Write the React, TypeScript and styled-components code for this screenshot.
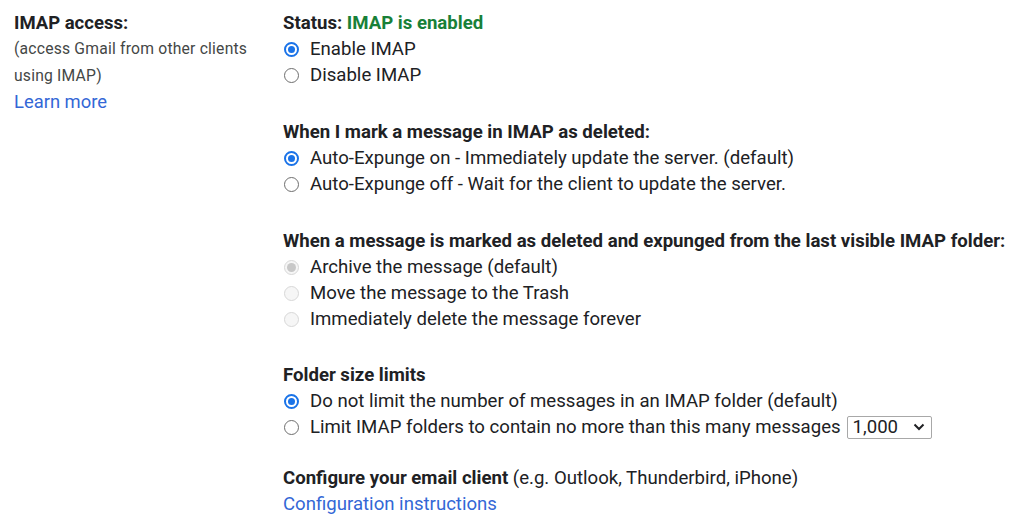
import React from "react";
import styled, { createGlobalStyle } from "styled-components";

const Global = createGlobalStyle`
  html, body { margin: 0; padding: 0; background: #fff; }
  body { font-family: Roboto, "Liberation Sans", Arial, sans-serif; color: #202124; }
`;

const Page = styled.div`
  display: grid;
  grid-template-columns: 269px 1fr;
  padding: 10px 0 0 14px;
  width: 1024px;
  box-sizing: border-box;
`;

const LeftCol = styled.div`
  display: flex;
  flex-direction: column;
  max-width: 250px;
`;

const LeftTitle = styled.div`
  font-weight: 700;
  font-size: 18.5px;
  line-height: 26px;
  color: #202124;
`;

const LeftSub = styled.div`
  font-size: 15.7px;
  line-height: 26.5px;
  color: #444746;
  letter-spacing: 0.2px;
`;

const Link = styled.a<{ $size?: number }>`
  color: #3367d6;
  text-decoration: none;
  font-size: ${(p) => p.$size ?? 18.4}px;
  line-height: 26px;
  cursor: pointer;
`;

const RightCol = styled.div`
  display: flex;
  flex-direction: column;
`;

const Section = styled.div<{ $gap?: number }>`
  display: flex;
  flex-direction: column;
  margin-top: ${(p) => p.$gap ?? 0}px;
`;

const Heading = styled.div`
  font-weight: 700;
  font-size: 18.6px;
  line-height: 26px;
  color: #202124;
  white-space: nowrap;
`;

const Green = styled.span`
  color: #188038;
`;

const Normal = styled.span`
  font-weight: 400;
`;

const Option = styled.label`
  display: flex;
  align-items: center;
  font-size: 18.6px;
  line-height: 26px;
  height: 26px;
  color: #202124;
  white-space: nowrap;
`;

const Radio = styled.span<{ $checked?: boolean; $disabled?: boolean }>`
  width: 15px;
  height: 15px;
  box-sizing: border-box;
  border-radius: 50%;
  margin: 0 11px 0 1px;
  flex: none;
  position: relative;
  border: ${(p) =>
    p.$disabled
      ? "1px solid #d8d8d8"
      : p.$checked
      ? "2px solid #1a73e8"
      : "1px solid #6e6e6e"};
  background: ${(p) => (p.$disabled ? "#f6f6f6" : "#fff")};
  &::after {
    content: "";
    display: ${(p) => (p.$checked ? "block" : "none")};
    position: absolute;
    inset: 2px;
    border-radius: 50%;
    background: ${(p) => (p.$disabled ? "#c8c8c8" : "#1a73e8")};
  }
`;

const Select = styled.span`
  display: inline-flex;
  align-items: center;
  justify-content: space-between;
  margin-left: 6px;
  width: 85px;
  height: 23px;
  box-sizing: border-box;
  border: 1px solid #a8a8a8;
  border-radius: 2px;
  padding: 0 6px 0 5px;
  font-size: 18.6px;
  color: #202124;
`;

const Chevron = () => (
  <svg width="12" height="8" viewBox="0 0 12 8" aria-hidden>
    <path d="M1.5 1.5 L6 6 L10.5 1.5" fill="none" stroke="#202124" strokeWidth="2" />
  </svg>
);

type Opt = { label: React.ReactNode; checked?: boolean; disabled?: boolean };

const RadioGroup = ({ options }: { options: Opt[] }) => (
  <>
    {options.map((o, i) => (
      <Option key={i}>
        <Radio $checked={o.checked} $disabled={o.disabled} />
        {o.label}
      </Option>
    ))}
  </>
);

export default function App() {
  return (
    <>
      <Global />
      <Page>
        <LeftCol>
          <LeftTitle>IMAP access:</LeftTitle>
          <LeftSub>(access Gmail from other clients using IMAP)</LeftSub>
          <Link>Learn more</Link>
        </LeftCol>
        <RightCol>
          <Section>
            <Heading>
              Status: <Green>IMAP is enabled</Green>
            </Heading>
            <RadioGroup
              options={[
                { label: "Enable IMAP", checked: true },
                { label: "Disable IMAP" },
              ]}
            />
          </Section>
          <Section $gap={31}>
            <Heading>When I mark a message in IMAP as deleted:</Heading>
            <RadioGroup
              options={[
                { label: "Auto-Expunge on - Immediately update the server. (default)", checked: true },
                { label: "Auto-Expunge off - Wait for the client to update the server." },
              ]}
            />
          </Section>
          <Section $gap={31}>
            <Heading>When a message is marked as deleted and expunged from the last visible IMAP folder:</Heading>
            <RadioGroup
              options={[
                { label: "Archive the message (default)", checked: true, disabled: true },
                { label: "Move the message to the Trash", disabled: true },
                { label: "Immediately delete the message forever", disabled: true },
              ]}
            />
          </Section>
          <Section $gap={30}>
            <Heading>Folder size limits</Heading>
            <RadioGroup
              options={[
                { label: "Do not limit the number of messages in an IMAP folder (default)", checked: true },
                {
                  label: (
                    <>
                      Limit IMAP folders to contain no more than this many messages
                      <Select>
                        1,000
                        <Chevron />
                      </Select>
                    </>
                  ),
                },
              ]}
            />
          </Section>
          <Section $gap={25}>
            <Heading>
              Configure your email client <Normal>(e.g. Outlook, Thunderbird, iPhone)</Normal>
            </Heading>
            <Link $size={18.6}>Configuration instructions</Link>
          </Section>
        </RightCol>
      </Page>
    </>
  );
}
